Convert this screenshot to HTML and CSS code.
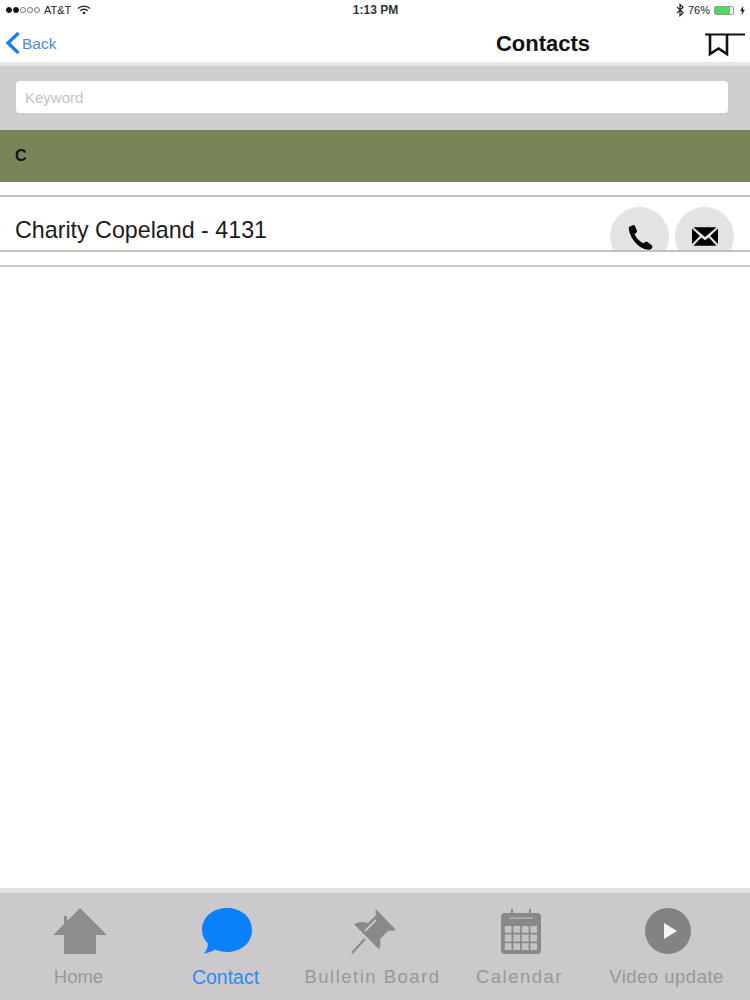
FILE: index.html
```html
<!DOCTYPE html>
<html lang="en">
<head>
    <meta charset="UTF-8">
    <meta name="viewport" content="width=device-width, initial-scale=1.0">
    <title>Contacts</title>
    <link rel="stylesheet" href="styles.css">
</head>
<body>
    <div class="page">
        <div class="status-bar">
            <div class="status-left">
                <span class="signal">
                    <i class="dot on"></i><i class="dot on"></i><i class="dot"></i><i class="dot"></i><i class="dot"></i>
                </span>
                <span>AT&amp;T</span>
                <svg class="wifi" width="14" height="10" viewBox="0 0 14 10">
                    <path d="M1 3.6a8.6 8.6 0 0 1 12 0" fill="none" stroke="#222" stroke-width="1.4"/>
                    <path d="M3.2 5.8a5.4 5.4 0 0 1 7.6 0" fill="none" stroke="#222" stroke-width="1.4"/>
                    <path d="M5.2 7.7a2.5 2.5 0 0 1 3.6 0L7 9.6z" fill="#222"/>
                </svg>
            </div>
            <div class="status-time">1:13 PM</div>
            <div class="status-right">
                <svg width="8" height="14" viewBox="0 0 8 14">
                    <path d="M1 3.8l6 6L4 12.6V1.4l3 2.8-6 6" fill="none" stroke="#222" stroke-width="1.2"/>
                </svg>
                <span>76%</span>
                <span class="battery"><span class="battery-fill"></span></span>
                <svg width="5" height="9" viewBox="0 0 5 9">
                    <path d="M3.2 0L0 5h2L1.6 9 5 3.8H3z" fill="#222"/>
                </svg>
            </div>
        </div>

        <div class="nav-bar">
            <a class="back" href="#">
                <svg width="16" height="24" viewBox="0 0 16 24">
                    <path d="M13.5 1L3 11l10.5 10" fill="none" stroke="#1a7fe8" stroke-width="3.4"/>
                </svg>
                <span>Back</span>
            </a>
            <h1>Contacts</h1>
            <svg class="bookmark" width="40" height="24" viewBox="0 0 40 24">
                <path d="M0 1.5H40" fill="none" stroke="#111" stroke-width="2"/>
                <path d="M5 2v19l8.5-5.5L22 21V2" fill="none" stroke="#111" stroke-width="2.6"/>
            </svg>
        </div>

        <div class="search-bar">
            <input class="search-input" type="text" placeholder="Keyword">
        </div>

        <div class="section-head">C</div>

        <div class="contact-list">
            <div class="contact-row">
                <span class="contact-name">Charity Copeland - 4131</span>
                <div class="contact-actions">
                    <a class="round-btn" href="#">
                        <svg width="28" height="28" viewBox="0 0 28 28">
                            <path d="M3 4L7 2C8 2 8.5 2.5 9 3L11 8C11 9 10.5 9.5 10 10L8.5 11C10 15 13 18 17.5 20.5L19 19C20 18.5 21 18.5 21.5 19L26 22.5C26.5 23 26.5 24 26 25L24.5 26.5C16 28 5 18 3 7C2.8 5.5 2.8 4.5 3 4Z" fill="#000"/>
                        </svg>
                    </a>
                    <a class="round-btn" href="#">
                        <svg width="26" height="19" viewBox="0 0 28 20">
                            <path d="M1.5 0H26.5L14 10.5z" fill="#000"/>
                            <path d="M0 1.5L8.5 9.5 0 18z" fill="#000"/>
                            <path d="M28 1.5L19.5 9.5 28 18z" fill="#000"/>
                            <path d="M1.5 20L10 11 14 14 18 11 26.5 20z" fill="#000"/>
                        </svg>
                    </a>
                </div>
            </div>
            <div class="contact-gap"></div>
        </div>

        <div class="tab-bar">
            <a class="tab" href="#">
                <svg width="54" height="46" viewBox="0 0 54 46">
                    <path d="M27 0L54 27H43V46H11V27H0L11 16V8H14V13z" fill="#8f8e8f"/>
                </svg>
                <span>Home</span>
            </a>
            <a class="tab active" href="#">
                <svg width="52" height="46" viewBox="0 0 52 46">
                    <path d="M26 0C40.5 0 51 9.5 51 22C51 34.5 40.5 44 26 44C21.5 44 17.5 43 14 41.5C11 43.5 7 45 3 45.5C5.5 42.5 7 39 7 35.5C3.3 32 1 27.5 1 22C1 9.5 11.5 0 26 0Z" fill="#0a80fb"/>
                </svg>
                <span>Contact</span>
            </a>
            <a class="tab spaced" href="#">
                <svg width="46" height="46" viewBox="0 0 46 46">
                    <path d="M1 45L14 31" fill="none" stroke="#8a898a" stroke-width="2"/>
                    <path d="M25 1.3L44 21C44.5 22.5 43 23 41 22.5L37 23L29 31C30 35 29 39 28 41.3L3 16.3C6 14 11 13 17 15L25 7C24.5 5 24 3 25 1.3Z" fill="#8a898a"/>
                    <path d="M14 23L25 12" fill="none" stroke="#c9c8c9" stroke-width="2"/>
                </svg>
                <span>Bulletin Board</span>
            </a>
            <a class="tab spaced" href="#">
                <svg width="40" height="46" viewBox="0 0 40 46">
                    <path d="M3 5H10V1H12V5H28V1H30V5H37C38.5 5 40 6.5 40 8V43C40 44.5 38.5 46 37 46H3C1.5 46 0 44.5 0 43V8C0 6.5 1.5 5 3 5Z" fill="#8a898a"/>
                    <path d="M3 17H37V43H3Z" fill="#c4c3c4"/>
                    <path d="M3 17H37M3 25.7H37M3 34.3H37M3 43H37M3 17V43M11.5 17V43M20 17V43M28.5 17V43M37 17V43" fill="none" stroke="#8a898a" stroke-width="1.8"/>
                    <path d="M8 10H32" fill="none" stroke="#b5b4b5" stroke-width="1.5"/>
                </svg>
                <span>Calendar</span>
            </a>
            <a class="tab video" href="#">
                <svg width="46" height="46" viewBox="0 0 46 46">
                    <circle cx="23" cy="23" r="23" fill="#848384"/>
                    <path d="M19 15L32 23L19 31z" fill="#f4f4f4"/>
                </svg>
                <span>Video update</span>
            </a>
        </div>
    </div>
</body>
</html>
```

FILE: styles.css
```css
html, body {
    margin: 0;
    padding: 0;
}
body {
    font-family: "Liberation Sans", Arial, sans-serif;
    background: white;
    color: #111;
}
a {
    text-decoration: none;
}
.page {
    width: 750px;
    height: 1000px;
    display: flex;
    flex-direction: column;
    overflow: hidden;
}

.status-bar {
    height: 22px;
    padding: 0 5px 2px 6px;
    box-sizing: border-box;
    display: grid;
    grid-template-columns: 1fr auto 1fr;
    align-items: center;
    font-size: 11px;
    color: #222;
}
.status-left {
    display: flex;
    align-items: center;
    gap: 4px;
}
.signal {
    display: flex;
    gap: 1px;
}
.dot {
    width: 6px;
    height: 6px;
    box-sizing: border-box;
    border: 1px solid #777;
    border-radius: 50%;
}
.dot.on {
    background: #111;
    border-color: #111;
}
.wifi {
    margin-left: 2px;
}
.status-time {
    font-size: 12px;
    font-weight: bold;
    color: #333;
}
.status-right {
    display: flex;
    align-items: center;
    justify-content: flex-end;
    gap: 4px;
}
.battery {
    width: 20px;
    height: 9px;
    box-sizing: border-box;
    border: 1px solid #999;
    border-radius: 2px;
    display: block;
    margin-right: 2px;
}
.battery-fill {
    display: block;
    width: 15px;
    height: 7px;
    background: #4cd964;
}

.nav-bar {
    height: 40px;
    box-sizing: border-box;
    padding: 4px 5px 0;
    display: flex;
    align-items: center;
}
.back {
    display: flex;
    align-items: center;
    gap: 1px;
    color: #3f8fe0;
    font-size: 15.5px;
}
.nav-bar h1 {
    margin: 0 115px 0 auto;
    font-size: 22px;
    font-weight: bold;
    color: #111;
}
.bookmark {
    margin-top: 2px;
}

.search-bar {
    height: 68px;
    box-sizing: border-box;
    padding: 15px 22px 17px 16px;
    background: #cdcfd1;
    border-top: 4px solid #e4e5e6;
}
.search-input {
    display: block;
    width: 100%;
    height: 32px;
    box-sizing: border-box;
    border: 0;
    border-radius: 4px;
    padding: 0 9px;
    background: white;
    font-family: inherit;
    font-size: 15px;
}
.search-input::placeholder {
    color: #c2c2c4;
}

.section-head {
    height: 52px;
    line-height: 52px;
    padding-left: 15px;
    background: #788558;
    font-size: 16px;
    font-weight: bold;
    color: #111;
}

.contact-list {
    flex: 1;
    padding-top: 13px;
}
.contact-row {
    height: 53px;
    border-top: 2px solid #c0c3b5;
    border-bottom: 2px solid #c0c3b5;
    padding: 0 16px 0 15px;
    display: flex;
    justify-content: space-between;
    overflow: hidden;
}
.contact-name {
    font-size: 23.25px;
    line-height: 66px;
    height: 53px;
    color: #1c1c1c;
}
.contact-actions {
    display: flex;
    gap: 6px;
    margin-top: 10px;
}
.round-btn {
    width: 59px;
    height: 59px;
    border-radius: 50%;
    background: #e4e3e4;
    display: flex;
    align-items: center;
    justify-content: center;
}
.contact-gap {
    height: 13px;
    border-bottom: 2px solid #c8cbbd;
}

.tab-bar {
    height: 112px;
    box-sizing: border-box;
    padding: 15px 9px 0 5px;
    background: #cbc9cb;
    border-top: 5px solid #e2e1e2;
    display: grid;
    grid-template-columns: repeat(5, 147px);
}
.tab {
    display: flex;
    flex-direction: column;
    align-items: center;
    gap: 12px;
    color: #999899;
    font-size: 18.5px;
    white-space: nowrap;
}
.tab svg {
    display: block;
    margin-left: 2px;
}
.tab.active {
    color: #2a8bf0;
    font-size: 19.5px;
}
.tab.spaced {
    letter-spacing: 1.5px;
}
.tab.video {
    letter-spacing: 0.5px;
}
```
